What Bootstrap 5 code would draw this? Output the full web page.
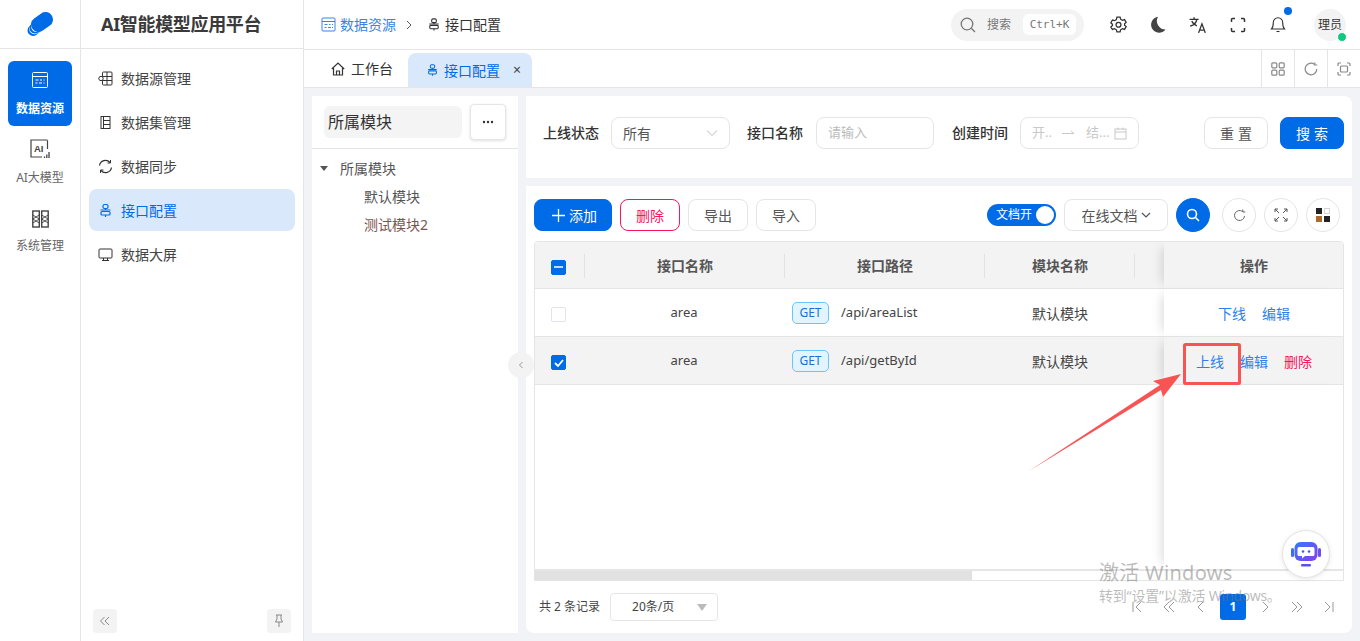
<!DOCTYPE html>
<html lang="zh-CN">
<head>
<meta charset="UTF-8" />
<title>AI智能模型应用平台</title>
<link href="https://cdn.jsdelivr.net/npm/bootstrap@5.3.2/dist/css/bootstrap.min.css" rel="stylesheet" />
<style>
  body {
    font-family: "Noto Sans", "Noto Sans CJK SC", sans-serif;
    font-size: 14px;
    color: #333;
    background: #f1f3f7;
    height: 641px;
    overflow: hidden;
  }
  svg { display: block; flex: none; }
  .shell { height: 641px; position: relative; }

  .rail { width: 81px; flex: none; background: #fff; border-right: 1px solid #e5e5e5; }
  .rail-logo { height: 49px; border-bottom: 1px solid #e5e5e5; }
  .rail-list { padding: 12px 8px 0; }
  .rail-item { height: 65px; border-radius: 6px; font-size: 12px; color: #666; margin-bottom: 3px; }
  .rail-on { background: #006be6; color: #fff; font-weight: 700; gap: 11px; padding-top: 10px; margin-bottom: 4px; }
  .rail-ai { padding-top: 9px; gap: 10px; }
  .rail-sys { padding-top: 12px; gap: 9px; }

  .side { width: 223px; flex: none; background: #fff; border-right: 1px solid #e5e5e5; }
  .side-title { height: 49px; border-bottom: 1px solid #e5e5e5; font-size: 18px; font-weight: 700; padding-left: 20px; color: #3a3a3a; letter-spacing: -.33px; }
  .side-list { padding: 8px 8px 0; flex: 1; gap: 2px; }
  .side-item { height: 42px; border-radius: 8px; padding-left: 9px; gap: 8px; color: #444; }
  .side-on { background: #d9e8fb; color: #006be6; }
  .side-foot { padding: 0 12px 8px; }
  .mini-btn { width: 24px; height: 24px; border-radius: 4px; background: #f3f3f3; }

  .main { min-width: 0; }
  .topbar { height: 50px; background: #fff; border-bottom: 1px solid #e5e5e5; padding: 0 14px 0 17px; }
  .crumb-link { color: #3a85e0; }
  .search-pill { width: 133px; height: 32px; border-radius: 16px; background: #f3f3f3; padding: 0 8px 0 9px; font-size: 12px; color: #777; }
  .search-key { width: 53px; height: 21px; border-radius: 6px; background: #fff; font: 11px "DejaVu Sans Mono", monospace; color: #777; margin-left: 12px; }
  .top-icons { width: 200px; margin-left: 14px; }
  .top-icon { width: 40px; position: relative; }
  .bell-dot { position: absolute; top: -9px; left: 26px; width: 8px; height: 8px; border-radius: 50%; background: #006be6; }
  .avatar { width: 32px; height: 32px; border-radius: 50%; background: #f3f3f3; font-size: 12px; margin-left: 16px; position: relative; }
  .avatar-dot { position: absolute; right: -1px; bottom: -1px; width: 10px; height: 10px; border-radius: 50%; background: #12c77f; border: 1px solid #fff; }

  .tabbar { height: 38px; background: #fff; border-bottom: 1px solid #e5e5e5; }
  .tab-home { padding-left: 27px; gap: 6px; width: 104px; color: #333; white-space: nowrap; }
  .tab-on { width: 124px; height: 34px; margin-top: 3px; background: #d9e8fb; color: #006be6; border-radius: 8px 8px 0 0; padding: 0 11px 0 18px; gap: 5px; white-space: nowrap; }
  .tab-close { margin-left: auto; color: #444; font-size: 14px; line-height: 1; }
  .tab-tool { width: 33px; height: 37px; border-left: 1px solid #e5e5e5; }

  .body-wrap { padding: 8px; gap: 8px; min-height: 0; }
  .tree-panel { width: 206px; flex: none; background: #fff; }
  .tree-head { height: 53px; border-bottom: 1px solid #e5e5e5; padding: 8px 12px 0; gap: 8px; }
  .tree-input { width: 138px; height: 32px; margin-top: 2px; border-radius: 6px; background: #f4f4f4; font-size: 16px; padding-left: 4px; color: #333; }
  .tree-more { width: 36px; height: 36px; padding: 0; border: 1px solid #e5e5e5; background: #fff; border-radius: 4px; box-shadow: 0 1px 3px rgba(0,0,0,.12); }
  .tree-list { padding-top: 5px; color: #555; }
  .tree-row { height: 28px; }
  .tree-root { padding-left: 8px; gap: 12px; }
  .tree-child { padding-left: 52px; }
  .tree-warn { color: #7a5550; }
  .tree-caret { width: 0; height: 0; border-left: 4px solid transparent; border-right: 4px solid transparent; border-top: 5px solid #555; }
  .collapse-tab { position: absolute; left: 508px; top: 352px; width: 26px; height: 26px; border-radius: 50%; background: #f3f3f3; z-index: 5; }

  .filter-card { height: 82px; background: #fff; padding: 21px 8px 0 17px; border-radius: 0 8px 0 0; }
  .filter-label { font-weight: 500; color: #333; margin-right: 8px; line-height: 32px; }
  .fake-field { height: 32px; border: 1px solid #e5e5e5; border-radius: 8px; padding: 0 11px; color: #555; background: #fff; }
  .field-select { width: 119px; margin-right: 17px; }
  .field-name { width: 118px; margin: 0 18px 0 5px; color: #bbb; font-size: 13px; }
  .field-date { width: 119px; margin-left: 4px; color: #c8c8c8; font-size: 13px; }
  .btn-plain, .btn-blue, .btn-pink { height: 32px; padding: 0; border-radius: 8px; font-size: 14px; }
  .btn-plain { border: 1px solid #e5e5e5; background: #fff; color: #555; }
  .btn-blue { background: #006be6; border: 1px solid #006be6; color: #fff; }
  .btn-pink { border: 1px solid #f5165c; background: #fff; color: #f5165c; }
  .btn-wide { width: 64px; letter-spacing: 4px; padding-left: 4px; }
  .btn-small { width: 60px; }

  .table-card { background: #fff; padding: 12px 8px; border-radius: 0 0 8px 8px; min-height: 0; }
  .tool-row { height: 34px; margin-bottom: 9px; padding-right: 4px; }
  .doc-switch { width: 69px; height: 22px; border-radius: 11px; background: #006be6; color: #fff; font-size: 12px; padding: 0 2px 0 9px; margin-right: 8px; }
  .doc-knob { width: 18px; height: 18px; border-radius: 50%; background: #fff; margin-left: auto; }
  .doc-select { width: 104px; gap: 3px; margin-right: 8px; }
  .circle-btn { width: 34px; height: 34px; padding: 0; border-radius: 50%; border: 1px solid #e5e5e5; background: #fff; }
  .circle-blue { background: #006be6; border-color: #006be6; margin-right: 12px; }

  .grid-box { height: 340px; border: 1px solid #e5e5e5; border-radius: 4px 4px 0 0; overflow: hidden; position: relative; }
  .data-table { table-layout: fixed; width: 809px; margin: 0; font-size: 14px; border-collapse: separate; border-spacing: 0; }
  .data-table th, .data-table td { padding: 0; vertical-align: middle; border-bottom: 1px solid #e5e5e5; text-align: center; color: #444; background: #fff; box-shadow: none; }
  .data-table th { height: 47px; background: #f3f3f3; font-weight: 700; color: #555; position: relative; padding-top: 1px; }
  .data-table td { height: 48px; padding-top: 1px; }
  .data-table .row-picked td { background: #f3f3f3; }
  .data-table .sep::after { content: ""; position: absolute; right: 0; top: 12px; height: 24px; width: 1px; background: #e2e2e2; }
  .data-table .fix-col { position: relative; box-shadow: -8px 0 10px -6px rgba(0,0,0,.14); }
  .data-table .filler td { height: 185px; }
  .data-table .cell-left { text-align: left; }
  .data-table .cell-tick { padding-right: 3px; }
  .data-table .cell-name { padding-right: 2px; }
  .latin-text { font-size: 13px; }
  .path-cell { padding-left: 7px; gap: 12px; }
  .method-tag { width: 37px; height: 22px; border: 1px solid #6cc4ff; background: #e2f5ff; color: #1c6fd6; border-radius: 5px; font-size: 12px; }
  .act { color: #2f80e8; text-decoration: none; }
  .act-red { color: #f5165c; }
  .act-row { gap: 16px; }
  .tick { width: 15px; height: 15px; margin: 0; border-radius: 2px; border: 1px solid #dfe3ea; background: #fff; }
  .tick-on { background: #006be6; border-color: #006be6; }
  .track { height: 10px; position: absolute; left: 0; right: 0; bottom: 0; background: #fff; border-top: 1px solid #e5e5e5; z-index: 3; }
  .thumb { width: 437px; height: 100%; background: #e1e1e1; }

  .pager-row { height: 28px; margin-top: 12px; padding-left: 5px; font-size: 12px; color: #444; }
  .size-select { width: 108px; height: 28px; margin-left: 10px; padding: 0 10px 0 21px; border: 1px solid #e5e5e5; border-radius: 4px; }
  .size-caret { width: 0; height: 0; border-left: 5px solid transparent; border-right: 5px solid transparent; border-top: 7px solid #bbb; margin-left: auto; }
  .pager { margin-left: auto; gap: 6px; padding-right: 2px; }
  .pager-item { width: 26px; height: 26px; border-radius: 3px; }
  .pager-on { background: #006be6; color: #fff; font-weight: 700; }

  .robot { position: absolute; left: 1282px; top: 530px; width: 48px; height: 48px; border-radius: 50%; background: #fff; border: 1px solid #e5e5e5; box-shadow: 0 1px 5px rgba(0,0,0,.1); z-index: 6; }
  .mark-layer { position: absolute; left: 0; top: 0; z-index: 7; pointer-events: none; }
  .watermark { position: absolute; left: 1099px; top: 563px; color: rgba(120,120,120,.5); z-index: 8; line-height: 1; }
  .watermark-big { font-size: 20px; margin-bottom: 6px; letter-spacing: .3px; }
  .watermark-small { font-size: 14px; white-space: nowrap; letter-spacing: -.2px; }
</style>
</head>
<body>
<div class="shell d-flex">
  <aside class="rail d-flex flex-column">
    <div class="rail-logo d-flex align-items-center justify-content-center">
      <svg width="28" height="28" viewBox="0 0 28 28" fill="none" stroke-linecap="round"><path d="M7 20.500L19 10" stroke="#006be6" stroke-width="11"/><path d="M8.500 19L20 9" stroke="#fff" stroke-width="10.500"/><path d="M9 18L20 9" stroke="#006be6" stroke-width="11"/><path d="M10.500 16.500L21 8" stroke="#fff" stroke-width="11"/><path d="M12.500 14.500L19.500 9.500" stroke="#006be6" stroke-width="15"/></svg>
    </div>
    <div class="rail-list">
      <div class="rail-item rail-on d-flex flex-column align-items-center">
        <svg width="18" height="18" viewBox="0 0 18 18" fill="none" stroke="#fff"><rect x="1.500" y="1.500" width="15" height="15" rx="1"/><path d="M1.500 5.500h15"/><path d="M4.500 9h3M9 9h2M12.500 9h1M4.500 12h2M8 12h3M12.500 12h1" stroke-width="1.200"/></svg>
        <span>数据资源</span>
      </div>
      <div class="rail-item rail-ai d-flex flex-column align-items-center">
        <svg width="20" height="20" viewBox="0 0 20 20" fill="none" stroke="#444" stroke-width="1.200"><path d="M17.500 1.500V10M17.500 1H1v17h11"/><text x="4" y="12.500" font-size="9.500" font-weight="700" fill="#444" stroke="none" font-family="Liberation Sans">AI</text><path d="M14.500 19v-1.500M16.800 19v-3.500M19 19v-6" stroke-width="1.300"/></svg>
        <span>AI大模型</span>
      </div>
      <div class="rail-item rail-sys d-flex flex-column align-items-center">
        <svg width="17" height="18" viewBox="0 0 17 18" fill="none" stroke="#444" stroke-width="1.400"><rect x=".8" y="1" width="6.500" height="16"/><rect x="9.700" y="1" width="6.500" height="16"/><path d="M.8 5l6.500 4-6.500 4M7.300 5L.8 9l6.500 4M9.700 5l6.500 4-6.500 4M16.200 5L9.700 9l6.500 4" stroke-width=".9"/></svg>
        <span>系统管理</span>
      </div>
    </div>
  </aside>

  <aside class="side d-flex flex-column">
    <div class="side-title d-flex align-items-center">AI智能模型应用平台</div>
    <div class="side-list d-flex flex-column">
      <div class="side-item d-flex align-items-center">
        <svg width="15" height="15" viewBox="0 0 15 15" fill="none" stroke="#333"><rect x="4.500" y="1" width="9.500" height="13" rx="1"/><path d="M9 1v13M4.500 5.500H14M4.500 9.500H14"/><circle cx="3" cy="7.500" r="2.200" fill="#fff"/></svg>
        <span>数据源管理</span>
      </div>
      <div class="side-item d-flex align-items-center">
        <svg width="15" height="15" viewBox="0 0 15 15" fill="none" stroke="#333"><rect x="3" y="1.500" width="9" height="12"/><path d="M5.500 1.500v12M5.500 5.500H12M5.500 9.500H12"/></svg>
        <span>数据集管理</span>
      </div>
      <div class="side-item d-flex align-items-center">
        <svg width="15" height="15" viewBox="0 0 15 15" fill="none" stroke="#333" stroke-width="1.200"><path d="M1.500 6.500A6 6 0 0 1 12 3.500M13.500 8.500A6 6 0 0 1 3 11.500"/><path d="M12.500 1v3h-3M2.500 14v-3h3" stroke-width="1"/></svg>
        <span>数据同步</span>
      </div>
      <div class="side-item side-on d-flex align-items-center">
        <svg width="15" height="15" viewBox="0 0 15 15" fill="none" stroke="#006be6" stroke-width="1.200"><rect x="5" y="1.500" width="5" height="4" rx="1.500"/><rect x="3" y="8.500" width="9" height="3.500" rx="1"/><path d="M2.500 7h10M7.500 12v2M7.500 5.500v1.500"/></svg>
        <span>接口配置</span>
      </div>
      <div class="side-item d-flex align-items-center">
        <svg width="15" height="15" viewBox="0 0 15 15" fill="none" stroke="#333"><rect x="1" y="2" width="13" height="9" rx="1"/><path d="M5.500 11v2.500M9.500 11v2.500M4 13.500h7"/></svg>
        <span>数据大屏</span>
      </div>
    </div>
    <div class="side-foot d-flex justify-content-between">
      <div class="mini-btn d-flex align-items-center justify-content-center">
        <svg width="12" height="12" viewBox="0 0 12 12" fill="none" stroke="#888"><path d="M5.500 2L1.500 6l4 4M10 2L6 6l4 4"/></svg>
      </div>
      <div class="mini-btn d-flex align-items-center justify-content-center">
        <svg width="12" height="14" viewBox="0 0 12 14" fill="none" stroke="#888"><path d="M3 1h6M4 1v4L2.500 8h7L8 5V1M6 8v5"/></svg>
      </div>
    </div>
  </aside>

  <main class="main flex-grow-1 d-flex flex-column">
    <header class="topbar d-flex align-items-center">
      <svg width="15" height="15" viewBox="0 0 15 15" fill="none" stroke="#3a85e0" class="me-1"><rect x="1" y="1" width="13" height="13" rx="1"/><path d="M1 4.500h13"/><path d="M3.500 7.500h3M8 7.500h1.500M11 7.500h1M3.500 10.500h2M7 10.500h3M11 10.500h1" stroke-width="1.100"/></svg>
      <span class="crumb-link">数据资源</span>
      <svg width="8" height="10" viewBox="0 0 8 10" fill="none" stroke="#555" style="margin:0 14px 0 9px"><path d="M2 1l4 4-4 4"/></svg>
      <svg width="14" height="15" viewBox="0 0 15 15" fill="none" stroke="#333" stroke-width="1.200" class="me-1"><rect x="5" y="1.500" width="5" height="4" rx="1.500"/><rect x="3" y="8.500" width="9" height="3.500" rx="1"/><path d="M2.500 7h10M7.500 12v2M7.500 5.500v1.500"/></svg>
      <span>接口配置</span>
      <div class="search-pill d-flex align-items-center ms-auto">
        <svg width="16" height="16" viewBox="0 0 16 16" fill="none" stroke="#777" stroke-width="1.300"><circle cx="7" cy="7" r="5.800"/><path d="M11.300 11.300L15 15"/></svg>
        <span style="margin-left:11px">搜索</span>
        <span class="search-key d-flex align-items-center justify-content-center">Ctrl+K</span>
      </div>
      <div class="top-icons d-flex align-items-center">
        <div class="top-icon d-flex justify-content-center">
          <svg width="17" height="17" viewBox="0 0 16 16" fill="none" stroke="#333" stroke-width="1.200"><path d="M6.500 1h3l.5 2 1.700 1 2-.6 1.500 2.600-1.500 1.400v1.200l1.500 1.400-1.500 2.600-2-.6-1.700 1-.5 2h-3l-.5-2-1.700-1-2 .6L.8 10.400l1.500-1.400V7.800L.8 6.400 2.300 3.800l2 .6L6 3.400z"/><circle cx="8" cy="8.200" r="2.300"/></svg>
        </div>
        <div class="top-icon d-flex justify-content-center">
          <svg width="17" height="17" viewBox="0 0 17 17"><path d="M8 .8A8 8 0 1 0 15.500 13.500 8.500 8.500 0 0 1 8 .8z" fill="#444"/></svg>
        </div>
        <div class="top-icon d-flex justify-content-center">
          <svg width="18" height="18" viewBox="0 0 16 16" fill="none" stroke="#333" stroke-width="1.200"><path d="M.5 3h8M4.500 1v2M7 3c-.5 3-2.500 5-6 6M2.500 4.500c.8 2 2.300 3.500 4.500 4.200"/><path d="M8.500 15l3-8 3 8M9.500 12.500h4"/></svg>
        </div>
        <div class="top-icon d-flex justify-content-center">
          <svg width="16" height="16" viewBox="0 0 16 16" fill="none" stroke="#333" stroke-width="1.500"><path d="M1.500 5V2.500a1 1 0 0 1 1-1H5M11 1.500h2.500a1 1 0 0 1 1 1V5M14.500 11v2.500a1 1 0 0 1-1 1H11M5 14.500H2.500a1 1 0 0 1-1-1V11"/></svg>
        </div>
        <div class="top-icon d-flex justify-content-center">
          <svg width="16" height="17" viewBox="0 0 16 17" fill="none" stroke="#333" stroke-width="1.100"><path d="M1.500 13h13c-1.500-1.500-1.800-3-1.800-6.500a4.700 4.700 0 0 0-9.400 0c0 3.500-.3 5-1.800 6.500z"/><path d="M6.500 15.500h3"/></svg>
          <span class="bell-dot"></span>
        </div>
      </div>
      <div class="avatar d-flex align-items-center justify-content-center">理员<span class="avatar-dot"></span></div>
    </header>

    <div class="tabbar d-flex align-items-start">
      <div class="tab-home d-flex align-items-center h-100">
        <svg width="14" height="14" viewBox="0 0 14 14" fill="none" stroke="#333" stroke-width="1.200"><path d="M.8 7L7 1l6.200 6M2.500 6v7h9V6M5.500 13V9h3v4"/></svg>
        <span>工作台</span>
      </div>
      <div class="tab-on d-flex align-items-center">
        <svg width="13" height="14" viewBox="0 0 15 15" fill="none" stroke="#006be6" stroke-width="1.200"><rect x="5" y="1.500" width="5" height="4" rx="1.500"/><rect x="3" y="8.500" width="9" height="3.500" rx="1"/><path d="M2.500 7h10M7.500 12v2M7.500 5.500v1.500"/></svg>
        <span>接口配置</span>
        <span class="tab-close">×</span>
      </div>
      <div class="tab-tool d-flex align-items-center justify-content-center ms-auto">
        <svg width="14" height="14" viewBox="0 0 14 14" fill="none" stroke="#888" stroke-width="1.200"><rect x=".8" y=".8" width="5" height="5" rx="1"/><rect x="8.200" y=".8" width="5" height="5" rx="1"/><rect x=".8" y="8.200" width="5" height="5" rx="1"/><rect x="8.200" y="8.200" width="5" height="5" rx="1"/></svg>
      </div>
      <div class="tab-tool d-flex align-items-center justify-content-center">
        <svg width="14" height="14" viewBox="0 0 14 14" fill="none" stroke="#888" stroke-width="1.200"><path d="M12.800 7A5.800 5.800 0 1 1 10.500 2.400"/><path d="M10.800 .5v2.500h2.500"/></svg>
      </div>
      <div class="tab-tool d-flex align-items-center justify-content-center">
        <svg width="14" height="14" viewBox="0 0 14 14" fill="none" stroke="#888" stroke-width="1.200"><path d="M1 4V2a1 1 0 0 1 1-1h2M10 1h2a1 1 0 0 1 1 1v2M13 10v2a1 1 0 0 1-1 1h-2M4 13H2a1 1 0 0 1-1-1v-2"/><rect x="3.500" y="4" width="7" height="6" rx="1"/></svg>
      </div>
    </div>

    <div class="body-wrap d-flex flex-grow-1">
      <section class="tree-panel d-flex flex-column">
        <div class="tree-head d-flex align-items-start">
          <div class="tree-input d-flex align-items-center">所属模块</div>
          <button type="button" class="tree-more d-flex align-items-center justify-content-center">
            <svg width="12" height="4" viewBox="0 0 12 4" fill="#333"><circle cx="2" cy="2" r="1.200"/><circle cx="6" cy="2" r="1.200"/><circle cx="10" cy="2" r="1.200"/></svg>
          </button>
        </div>
        <div class="tree-list">
          <div class="tree-row tree-root d-flex align-items-center"><span class="tree-caret"></span><span>所属模块</span></div>
          <div class="tree-row tree-child d-flex align-items-center">默认模块</div>
          <div class="tree-row tree-child tree-warn d-flex align-items-center">测试模块2</div>
        </div>
      </section>

      <section class="flex-grow-1 d-flex flex-column gap-2" style="min-width:0">
        <div class="filter-card d-flex align-items-start">
          <span class="filter-label" style="margin-right:12px">上线状态</span>
          <div class="fake-field field-select d-flex align-items-center justify-content-between">
            <span>所有</span>
            <svg width="12" height="8" viewBox="0 0 12 8" fill="none" stroke="#bbb"><path d="M1 1.500l5 5 5-5"/></svg>
          </div>
          <span class="filter-label">接口名称</span>
          <div class="fake-field field-name d-flex align-items-center">请输入</div>
          <span class="filter-label">创建时间</span>
          <div class="fake-field field-date d-flex align-items-center">
            <span>开..</span>
            <svg width="14" height="8" viewBox="0 0 14 8" fill="none" stroke="#c8c8c8" style="margin:0 10px"><path d="M0 4.500h12M9 2l3 2.500"/></svg>
            <span>结...</span>
            <svg width="13" height="13" viewBox="0 0 13 13" fill="none" stroke="#c8c8c8" class="ms-auto"><rect x="1" y="2" width="11" height="10"/><path d="M1 5h11M4 .5V3M9 .5V3"/></svg>
          </div>
          <button type="button" class="btn btn-plain btn-wide ms-auto">重置</button>
          <button type="button" class="btn btn-blue btn-wide" style="margin-left:12px">搜索</button>
        </div>

        <div class="table-card flex-grow-1 d-flex flex-column">
          <div class="tool-row d-flex align-items-center">
            <button type="button" class="btn btn-blue d-flex align-items-center justify-content-center gap-1" style="width:78px;padding-left:3px">
              <svg width="13" height="13" viewBox="0 0 13 13" fill="none" stroke="#fff" stroke-width="1.300"><path d="M6.500 0v13M0 6.500h13"/></svg>添加
            </button>
            <button type="button" class="btn btn-pink btn-small" style="margin-left:8px">删除</button>
            <button type="button" class="btn btn-plain btn-small" style="margin-left:8px">导出</button>
            <button type="button" class="btn btn-plain btn-small" style="margin-left:8px">导入</button>
            <div class="doc-switch d-flex align-items-center ms-auto"><span>文档开</span><span class="doc-knob"></span></div>
            <button type="button" class="btn btn-plain doc-select d-flex align-items-center justify-content-center">
              在线文档
              <svg width="10" height="6" viewBox="0 0 10 6" fill="none" stroke="#555" stroke-width="1.200"><path d="M1 1l4 4 4-4"/></svg>
            </button>
            <button type="button" class="circle-btn circle-blue d-flex align-items-center justify-content-center">
              <svg width="14" height="14" viewBox="0 0 14 14" fill="none" stroke="#fff" stroke-width="1.600"><circle cx="6" cy="6" r="4.500"/><path d="M9.500 9.500L13 13"/></svg>
            </button>
            <button type="button" class="circle-btn d-flex align-items-center justify-content-center">
              <svg width="13" height="13" viewBox="0 0 13 13" fill="none" stroke="#666"><path d="M11.500 7A5 5 0 1 1 9.500 2.500"/><path d="M9.800 .5v2.500h2.500"/></svg>
            </button>
            <button type="button" class="circle-btn d-flex align-items-center justify-content-center" style="margin-left:8px">
              <svg width="14" height="14" viewBox="0 0 14 14" fill="none" stroke="#555"><path d="M1 4V1h3M10 1h3v3M13 10v3h-3M4 13H1v-3M1 1l4 4M13 1L9 5M13 13L9 9M1 13l4-4"/></svg>
            </button>
            <button type="button" class="circle-btn d-flex align-items-center justify-content-center" style="margin-left:8px">
              <svg width="14" height="14" viewBox="0 0 14 14"><rect x="0" y="0" width="6" height="6" fill="#222"/><rect x="0" y="8" width="6" height="6" fill="#a86a2e"/><rect x="8" y="8" width="6" height="6" fill="#222"/><rect x="8.500" y=".5" width="5" height="5" fill="none" stroke="#aaa" stroke-dasharray="1 1"/></svg>
            </button>
          </div>

          <div class="grid-box">
            <table class="table data-table">
              <colgroup><col style="width:50px"><col style="width:200px"><col style="width:200px"><col style="width:150px"><col style="width:29px"><col style="width:180px"></colgroup>
              <thead>
                <tr>
                  <th class="sep cell-tick"><span class="tick tick-on d-inline-flex align-items-center justify-content-center align-middle"><svg width="9" height="2" viewBox="0 0 9 2"><path d="M0 1h9" stroke="#fff" stroke-width="1.500"/></svg></span></th>
                  <th class="sep">接口名称</th>
                  <th class="sep">接口路径</th>
                  <th class="sep">模块名称</th>
                  <th></th>
                  <th class="fix-col">操作</th>
                </tr>
              </thead>
              <tbody>
                <tr>
                  <td class="cell-tick"><span class="tick d-inline-block align-middle"></span></td>
                  <td class="cell-name latin-text">area</td>
                  <td class="cell-left latin-text"><div class="path-cell d-flex align-items-center"><span class="method-tag d-flex align-items-center justify-content-center">GET</span><span>/api/areaList</span></div></td>
                  <td>默认模块</td>
                  <td></td>
                  <td class="fix-col"><div class="act-row d-flex justify-content-center"><a class="act" href="#">下线</a><a class="act" href="#">编辑</a></div></td>
                </tr>
                <tr class="row-picked">
                  <td class="cell-tick"><span class="tick tick-on d-inline-flex align-items-center justify-content-center align-middle"><svg width="10" height="8" viewBox="0 0 10 8" fill="none" stroke="#fff" stroke-width="1.800"><path d="M1 4l3 3 5-6"/></svg></span></td>
                  <td class="cell-name latin-text">area</td>
                  <td class="cell-left latin-text"><div class="path-cell d-flex align-items-center"><span class="method-tag d-flex align-items-center justify-content-center">GET</span><span>/api/getById</span></div></td>
                  <td>默认模块</td>
                  <td></td>
                  <td class="fix-col"><div class="act-row d-flex justify-content-center"><a class="act" href="#">上线</a><a class="act" href="#">编辑</a><a class="act act-red" href="#">删除</a></div></td>
                </tr>
                <tr class="filler"><td></td><td></td><td></td><td></td><td></td><td class="fix-col"></td></tr>
              </tbody>
            </table>
            <div class="track"><div class="thumb"></div></div>
          </div>

          <div class="pager-row d-flex align-items-center">
            <span>共 2 条记录</span>
            <div class="size-select d-flex align-items-center"><span>20条/页</span><span class="size-caret"></span></div>
            <div class="pager d-flex align-items-center">
              <div class="pager-item d-flex align-items-center justify-content-center"><svg width="12" height="12" viewBox="0 0 12 12" fill="none" stroke="#999"><path d="M2 1v10M10 1L5 6l5 5"/></svg></div>
              <div class="pager-item d-flex align-items-center justify-content-center"><svg width="12" height="12" viewBox="0 0 12 12" fill="none" stroke="#999"><path d="M6 1L1 6l5 5M11 1L6 6l5 5"/></svg></div>
              <div class="pager-item d-flex align-items-center justify-content-center"><svg width="12" height="12" viewBox="0 0 12 12" fill="none" stroke="#999"><path d="M8 1L3 6l5 5"/></svg></div>
              <div class="pager-item pager-on d-flex align-items-center justify-content-center">1</div>
              <div class="pager-item d-flex align-items-center justify-content-center"><svg width="12" height="12" viewBox="0 0 12 12" fill="none" stroke="#999"><path d="M4 1l5 5-5 5"/></svg></div>
              <div class="pager-item d-flex align-items-center justify-content-center"><svg width="12" height="12" viewBox="0 0 12 12" fill="none" stroke="#999"><path d="M1 1l5 5-5 5M6 1l5 5-5 5"/></svg></div>
              <div class="pager-item d-flex align-items-center justify-content-center"><svg width="12" height="12" viewBox="0 0 12 12" fill="none" stroke="#999"><path d="M10 1v10M2 1l5 5-5 5"/></svg></div>
            </div>
          </div>
        </div>
      </section>
    </div>
  </main>

  <div class="collapse-tab d-flex align-items-center justify-content-center">
    <svg width="8" height="10" viewBox="0 0 8 10" fill="none" stroke="#999"><path d="M5.500 2L2.500 5l3 3"/></svg>
  </div>

  <div class="robot d-flex align-items-center justify-content-center">
    <svg width="30" height="26" viewBox="0 0 30 26"><defs><linearGradient id="botFill" x1="0" y1="0" x2="1" y2="1"><stop offset="0" stop-color="#2f7bff"/><stop offset="1" stop-color="#8a3cf0"/></linearGradient></defs><rect x="0" y="7" width="3" height="9" rx="1.500" fill="#3d6df5"/><rect x="27" y="7" width="3" height="9" rx="1.500" fill="#6a4cf2"/><rect x="3.500" y="1" width="23" height="19" rx="6" fill="url(#botFill)"/><path d="M8 6h14a1.500 1.500 0 0 1 1.500 1.500v6A1.500 1.500 0 0 1 22 15h-8l-3 2.500V15H8a1.500 1.500 0 0 1-1.500-1.500v-6A1.500 1.500 0 0 1 8 6z" fill="#fff"/><circle cx="12" cy="10.500" r="1.300" fill="#3d5cf0"/><circle cx="18" cy="10.500" r="1.300" fill="#3d5cf0"/><rect x="10" y="23" width="10" height="2.500" rx="1.200" fill="#5a50f0"/></svg>
  </div>

  <svg class="mark-layer" width="1360" height="641" viewBox="0 0 1360 641">
    <rect x="1184.500" y="344.500" width="55" height="39" fill="none" stroke="#f95454" stroke-width="3" rx="1"/>
    <path d="M1029 471L1160 385L1153 381L1181 374L1163 397L1161 390Z" fill="#f95454"/>
  </svg>

  <div class="watermark">
    <div class="watermark-big">激活 Windows</div>
    <div class="watermark-small">转到“设置”以激活 Windows。</div>
  </div>
</div>
<script src="https://cdn.jsdelivr.net/npm/bootstrap@5.3.2/dist/js/bootstrap.bundle.min.js"></script>
</body>
</html>
